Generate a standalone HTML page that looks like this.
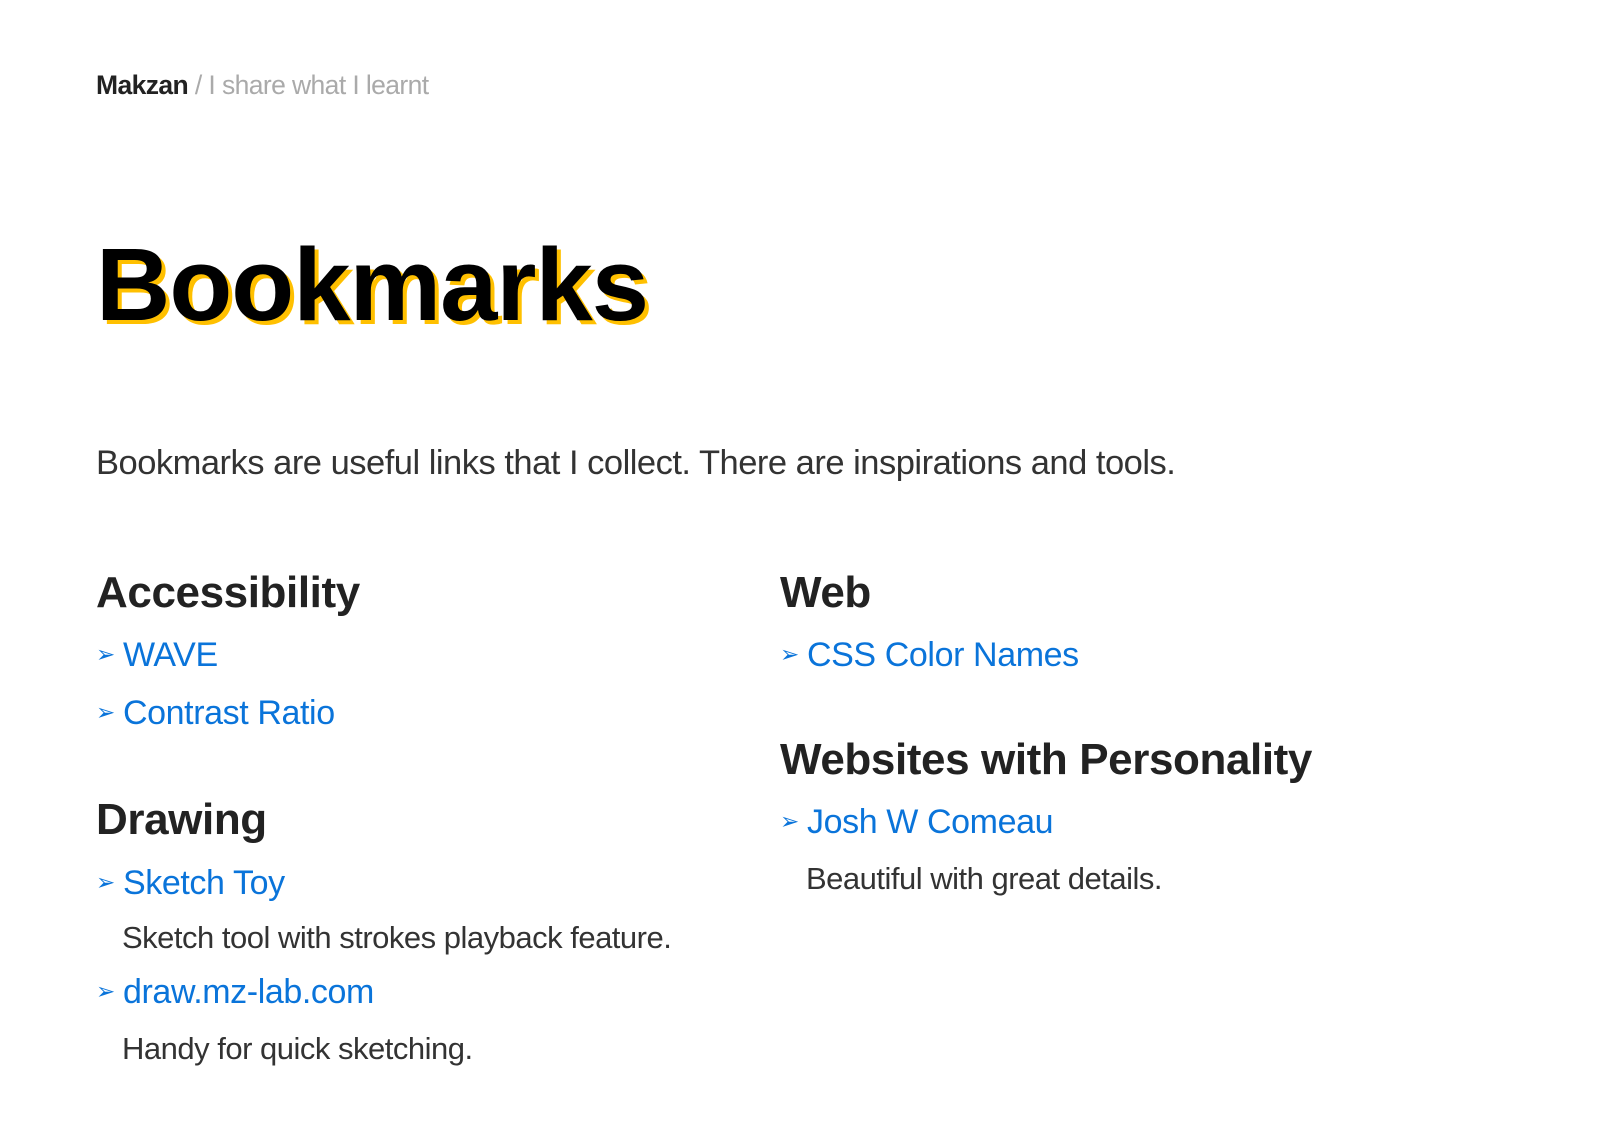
<!DOCTYPE html>
<html><head><meta charset="utf-8"><style>
body{margin:0;width:1614px;height:1144px;background:#fff;font-family:"Liberation Sans",sans-serif;position:relative;overflow:hidden}
.a{position:absolute;white-space:nowrap}
.hd{font-size:44px;font-weight:bold;color:#222;letter-spacing:-0.4px;line-height:53px}
.ln{font-size:34px;color:#0a74da;line-height:45px;letter-spacing:-0.4px}
.ln .ar{font-family:"DejaVu Sans",sans-serif;font-size:23px;display:inline-block;width:27px;vertical-align:4px}
.ds{font-size:31px;color:#333;line-height:39px;letter-spacing:-0.5px}
</style></head><body>
<div class="a" style="left:96px;top:70px;font-size:26.5px;line-height:31px;letter-spacing:-0.6px"><b style="color:#222">Makzan</b> <span style="color:#aaa">/ I share what I learnt</span></div>
<div class="a" style="left:96px;top:227px;font-size:103px;font-weight:bold;line-height:116px;color:#000;letter-spacing:-1px;text-shadow:4px 4px 0 #ffc000">Bookmarks</div>
<div class="a" style="left:96px;top:441px;font-size:34.5px;line-height:44px;color:#333;letter-spacing:-0.5px">Bookmarks are useful links that I collect. There are inspirations and tools.</div>

<div class="a hd" style="left:96px;top:566px">Accessibility</div>
<div class="a ln" style="left:96px;top:633px"><span class="ar">➢</span>WAVE</div>
<div class="a ln" style="left:96px;top:691px"><span class="ar">➢</span>Contrast Ratio</div>
<div class="a hd" style="left:96px;top:793px">Drawing</div>
<div class="a ln" style="left:96px;top:861px"><span class="ar">➢</span>Sketch Toy</div>
<div class="a ds" style="left:122px;top:918px">Sketch tool with strokes playback feature.</div>
<div class="a ln" style="left:96px;top:970px"><span class="ar">➢</span>draw.mz-lab.com</div>
<div class="a ds" style="left:122px;top:1029px">Handy for quick sketching.</div>

<div class="a hd" style="left:780px;top:566px">Web</div>
<div class="a ln" style="left:780px;top:633px"><span class="ar">➢</span>CSS Color Names</div>
<div class="a hd" style="left:780px;top:733px">Websites with Personality</div>
<div class="a ln" style="left:780px;top:800px"><span class="ar">➢</span>Josh W Comeau</div>
<div class="a ds" style="left:806px;top:859px">Beautiful with great details.</div>
</body></html>
